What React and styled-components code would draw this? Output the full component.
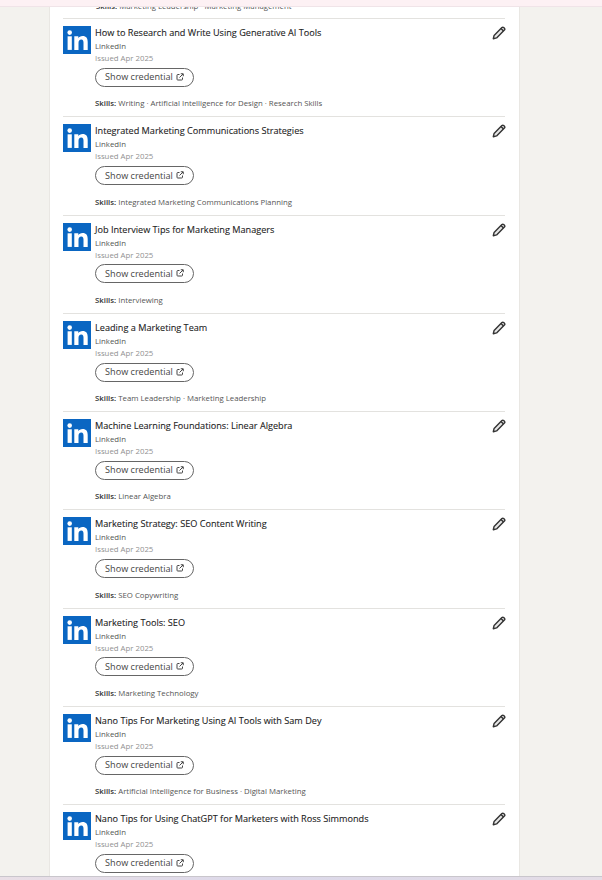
import React from "react";
import styled, { createGlobalStyle } from "styled-components";

const Global = createGlobalStyle`
  html, body { margin: 0; padding: 0; height: 880px; overflow: hidden; background: #f3f2ee; }
  body { font-family: "Open Sans", "Noto Sans", "Liberation Sans", sans-serif; }
`;
const Page = styled.div`
  width: 602px; height: 880px; display: flex; flex-direction: column; background: #f3f2ee; overflow: hidden;
`;
const TopStrip = styled.div`
  flex: 0 0 7px; background: #fdf1f4; border-bottom: 1px solid #f0e4e8; box-sizing: border-box; position: relative; z-index: 1;
`;
const Main = styled.main`
  flex: 1 1 0; min-height: 0; overflow: hidden; padding-left: 49px;
`;
const BottomStrip = styled.div`
  flex: 0 0 4px; background: linear-gradient(90deg, #e9dfe6, #dcd9ea 45%, #e4dde6); border-top: 1px solid #c9c6cc; box-sizing: border-box;
`;
const Card = styled.section`
  width: 471px; height: 100%; box-sizing: border-box; background: #fff;
  border-left: 1px solid #e9e7e3; border-right: 1px solid #e9e7e3; padding: 0 14px 0 13px; overflow: hidden;
`;
const List = styled.ul`
  list-style: none; margin: -7.5px 0 0; padding: 0;
`;
const ClippedSkills = styled.div`
  height: 18.5px; display: flex; align-items: flex-start; padding: 1.5px 0 0 33px; box-sizing: border-box;
`;
const Row = styled.li`
  height: 98.25px; box-sizing: border-box; border-top: 1px solid #e3e2df; padding-top: 7px; display: flex; gap: 4px; position: relative;
`;
const Logo = styled.svg`
  flex: 0 0 28px; width: 28px; height: 28px; display: block;
`;
const Body = styled.div`
  flex: 1; display: flex; flex-direction: column; min-width: 0;
`;
const Title = styled.h3`
  margin: 0; font-size: 9.14px; line-height: 13px; font-weight: 400; color: #1b1b1b; -webkit-text-stroke: 0.1px #1b1b1b;
`;
const Issuer = styled.div`
  font-size: 7.8px; line-height: 11px; color: #555; margin-top: 2px;
`;
const Issued = styled.div`
  font-size: 7.8px; line-height: 11px; color: #919191; margin-top: 1px;
`;
const Button = styled.a`
  display: inline-flex; align-items: center; justify-content: center; gap: 3px; align-self: flex-start;
  box-sizing: border-box; width: 99px; height: 19px; margin-top: 3.75px; padding-bottom: 1px; border: 1px solid #666; border-radius: 10px;
  font-size: 9.1px; color: #444; background: #fff;
`;
const Skills = styled.p`
  margin: 11.5px 0 0; font-size: 7.8px; line-height: 11px; color: #555; white-space: nowrap;
  b { font-weight: 600; color: #333; }
`;
const ClippedText = styled(Skills)`
  margin: 0;
`;
const Edit = styled.button`
  position: absolute; right: -2px; top: 6px; width: 16px; height: 16px; padding: 0; border: 0; background: none; display: flex; align-items: center; justify-content: center;
`;

const LinkedInLogo = () => (
  <Logo viewBox="0 0 28 28" aria-hidden="true">
    <rect width="28" height="28" fill="#0a66c2" />
    <circle cx="6.7" cy="6.6" r="2.3" fill="#fff" />
    <rect x="4.6" y="10.3" width="4.2" height="13.6" fill="#fff" />
    <path d="M11.3 10.3h4v1.9c.7-1.2 2.2-2.2 4.3-2.2 3.7 0 5.1 2.3 5.1 6v7.9h-4.2v-7.1c0-1.9-.5-3.2-2.2-3.2-1.9 0-2.8 1.4-2.8 3.3v7h-4.2z" fill="#fff" />
  </Logo>
);
const ExternalIcon = () => (
  <svg width="8" height="8" viewBox="0 0 16 16" fill="none" stroke="#444" strokeWidth="2" aria-hidden="true">
    <path d="M7 3H3.500A1.500 1.500 0 0 0 2 4.500v8A1.500 1.500 0 0 0 3.500 14h8a1.500 1.500 0 0 0 1.500-1.500V9" />
    <path d="M7 9l7-7M9.500 1.500H14.500V6.500" />
  </svg>
);
const PencilIcon = () => (
  <svg width="14" height="14" viewBox="0 0 14 14" fill="none" aria-hidden="true">
    <path d="M1.300 12.700l.8-3.300L9.900 1.600a1.300 1.300 0 0 1 1.800 0l.7.700a1.300 1.300 0 0 1 0 1.800L4.600 11.900z" fill="#e6e6e6" stroke="#333" strokeWidth="1.400" strokeLinejoin="round" />
    <path d="M9 2.500l2.500 2.500" stroke="#333" strokeWidth="1.400" />
  </svg>
);

const courses = [
  ["How to Research and Write Using Generative AI Tools", "Writing · Artificial Intelligence for Design · Research Skills"],
  ["Integrated Marketing Communications Strategies", "Integrated Marketing Communications Planning"],
  ["Job Interview Tips for Marketing Managers", "Interviewing"],
  ["Leading a Marketing Team", "Team Leadership · Marketing Leadership"],
  ["Machine Learning Foundations: Linear Algebra", "Linear Algebra"],
  ["Marketing Strategy: SEO Content Writing", "SEO Copywriting"],
  ["Marketing Tools: SEO", "Marketing Technology"],
  ["Nano Tips For Marketing Using AI Tools with Sam Dey", "Artificial Intelligence for Business · Digital Marketing"],
  ["Nano Tips for Using ChatGPT for Marketers with Ross Simmonds", ""],
];

export default function App() {
  return (
    <Page>
      <Global />
      <TopStrip />
      <Main>
        <Card>
          <List>
            <ClippedSkills>
              <ClippedText><b>Skills:</b> Marketing Leadership · Marketing Management</ClippedText>
            </ClippedSkills>
            {courses.map(([title, skills]) => (
              <Row key={title}>
                <LinkedInLogo />
                <Body>
                  <Title>{title}</Title>
                  <Issuer>LinkedIn</Issuer>
                  <Issued>Issued Apr 2025</Issued>
                  <Button>Show credential <ExternalIcon /></Button>
                  {skills && <Skills><b>Skills:</b> {skills}</Skills>}
                </Body>
                <Edit aria-label="Edit"><PencilIcon /></Edit>
              </Row>
            ))}
          </List>
        </Card>
      </Main>
      <BottomStrip />
    </Page>
  );
}
